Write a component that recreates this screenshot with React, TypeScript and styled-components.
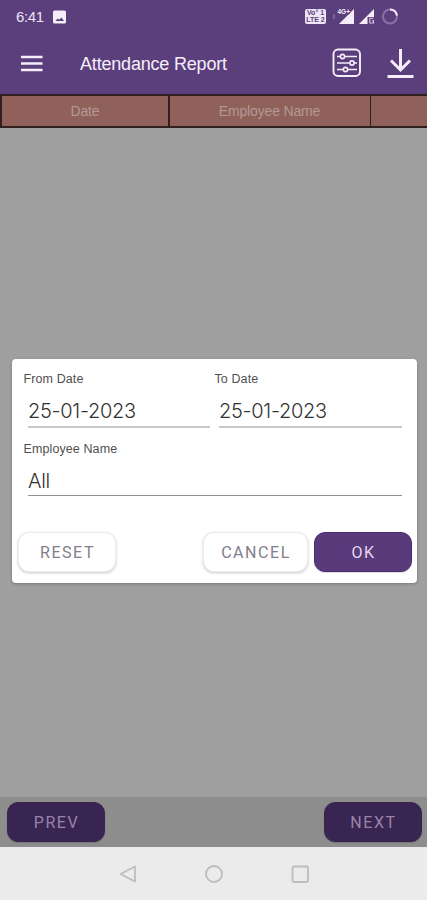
import React from 'react';
import styled, { createGlobalStyle } from 'styled-components';

const GlobalStyle = createGlobalStyle`
  * { box-sizing: border-box; }
  body { margin: 0; font-family: Inter, "Liberation Sans", sans-serif; }
  svg { display: block; flex: none; }
`;

const Screen = styled.div`
  position: relative;
  display: flex;
  flex-direction: column;
  width: 427px;
  height: 900px;
  overflow: hidden;
  background: #9f9f9f;
`;

const StatusBar = styled.header`
  display: flex;
  align-items: center;
  height: 32px;
  padding: 1px 28px 0 16px;
  background: #5b3f7c;
  color: #eee4f5;
`;

const Clock = styled.time`
  width: 37px;
  font: 400 15px/18px "Liberation Sans", sans-serif;
  letter-spacing: -0.35px;
`;

const StatusIcons = styled.div`
  display: flex;
  align-items: center;
  margin-left: auto;
`;

const VolteBadge = styled.span`
  display: grid;
  align-content: center;
  width: 21px;
  height: 15px;
  margin-right: 7px;
  border-radius: 2px;
  background: #eee4f5;
  color: #5b3f7c;
  font: 700 7px/6.5px "Liberation Sans", sans-serif;
  text-align: center;
  white-space: nowrap;
`;

const AppBar = styled.div`
  display: flex;
  align-items: center;
  height: 62px;
  padding: 0 13px 0 20px;
  background: #5b3f7c;
  color: #f5eef9;
`;

const Title = styled.h1`
  flex: 1;
  margin: 1px 0 0 36px;
  font: 400 18px/24px "Liberation Sans", sans-serif;
  letter-spacing: -0.19px;
`;

const Actions = styled.div`
  display: flex;
  align-items: center;
  gap: 24px;
`;

const TableHead = styled.div`
  display: grid;
  grid-template-columns: 166px 200px 1fr;
  column-gap: 1.5px;
  height: 34px;
  padding: 1.5px 0 2px 2px;
  background: #30201f;
`;

const HeadCell = styled.div`
  display: flex;
  align-items: center;
  justify-content: center;
  background: #90615b;
  color: #b29a94;
  font: 400 14px/18px "Liberation Sans", sans-serif;
  letter-spacing: -0.15px;
`;

const Body = styled.main`
  flex: 1;
`;

const Footer = styled.footer`
  display: flex;
  justify-content: space-between;
  align-items: center;
  height: 50px;
  padding: 0 5px 0 7px;
  background: #8d8d8d;
`;

const NavBar = styled.nav`
  display: flex;
  justify-content: center;
  align-items: center;
  gap: 66px;
  height: 53px;
  background: #ebebeb;
`;

const Dialog = styled.section`
  position: absolute;
  left: 12px;
  top: 359px;
  width: 405px;
  height: 224px;
  display: flex;
  flex-direction: column;
  padding: 12px 5px 11px;
  border-radius: 4px;
  background: #fff;
  box-shadow: 0 1px 3px rgba(0, 0, 0, 0.25);
`;

const DateFields = styled.div`
  display: grid;
  grid-template-columns: 186px 187px;
  column-gap: 5px;
  height: 70px;
  padding: 0 10px 0 7px;
`;

const FieldBlock = styled.div<{ $full?: boolean }>`
  display: flex;
  flex-direction: column;
  padding: ${(p) => (p.$full ? '0 10px 0 7px' : '0')};
`;

const Label = styled.label`
  margin-left: -0.5px;
  font: 400 12.5px/16px "Liberation Sans", sans-serif;
  letter-spacing: 0.1px;
  color: #505050;
`;

const Value = styled.div<{ $thick?: boolean }>`
  height: ${(p) => (p.$thick ? '41px' : '39px')};
  margin-left: 4px;
  padding-top: 12px;
  border-bottom: ${(p) => (p.$thick ? '2px solid #c9c9c9' : '1px solid #929292')};
  color: #333;
  font: 300 20px/25px Inter, sans-serif;
  letter-spacing: ${(p) => (p.$thick ? '-0.3px' : '-0.3px')};
`;

const DialogActions = styled.div`
  display: flex;
  align-items: center;
  gap: 6px;
  margin-top: auto;
  padding-left: 1px;
`;

const Button = styled.button<{ $tone: 'light' | 'primary' | 'dim'; $wide?: boolean }>`
  width: ${(p) => (p.$wide ? '105px' : '98px')};
  height: 40px;
  margin: 0;
  padding: 1px 0 0 1px;
  border: 1px solid ${(p) => ({ light: '#ededed', primary: '#4b2975', dim: '#38254f' })[p.$tone]};
  border-radius: 11px;
  background: ${(p) => ({ light: '#fff', primary: '#593a7b', dim: '#392551' })[p.$tone]};
  color: ${(p) => ({ light: '#827e8a', primary: '#e5d8ee', dim: '#9a83aa' })[p.$tone]};
  box-shadow: ${(p) => (p.$tone === 'light' ? '0 1px 3px rgba(0,0,0,.22)' : '0 1px 1px rgba(0,0,0,.15)')};
  font: 400 16px/20px Roboto, sans-serif;
  letter-spacing: 1.55px;
`;

const Reset = styled(Button)`
  margin-right: auto;
`;

const PictureIcon = () => (
  <svg width="13" height="14" viewBox="0 0 13 14">
    <rect y="0.5" width="13" height="13" rx="1.5" fill="#f5eef9" />
    <path d="M2.5 11l2.2-2.6 1.5 1.4L8.5 7.5l2.5 3.5z" fill="#5b3f7c" />
  </svg>
);

const SignalIcons = () => (
  <svg width="66" height="20" viewBox="0 0 66 20">
    <path d="M1 7v5" stroke="#7b6198" strokeWidth="2" />
    <path d="M21 2v15H6z" fill="#f5eef9" />
    <path d="M5 1h12v6H5z" fill="#5b3f7c" />
    <text x="4.5" y="6.5" fontFamily="Liberation Sans" fontWeight="700" fontSize="6.5" fill="#f5eef9">4G+</text>
    <path d="M41 2v15H26z" fill="#f5eef9" />
    <path d="M34.5 10H41v7h-6.5z" fill="#5b3f7c" />
    <path d="M40.5 11.2h-3.7v4.8h3.7v-2.2h-1.5" stroke="#d8c9e4" strokeWidth="1.1" fill="none" />
    <circle cx="57" cy="9.5" r="7" fill="none" stroke="#8b72a6" strokeWidth="2" />
    <path d="M57 2.5a7 7 0 0 1 7 6" fill="none" stroke="#f5eef9" strokeWidth="2.2" />
  </svg>
);

const MenuIcon = () => (
  <svg width="24" height="20" viewBox="0 0 24 20">
    <path d="M1 4h21.5M1 10.5h21.5M1 17h21.5" stroke="#f5eef9" strokeWidth="2.3" />
  </svg>
);

const FilterIcon = () => (
  <svg width="30" height="30" viewBox="0 0 30 30" fill="none" stroke="#f5eef9">
    <rect x="1.5" y="1.5" width="26.5" height="26.5" rx="4.5" strokeWidth="1.9" />
    <path d="M5 8.5h20M5 15h20M5 21.5h20" strokeWidth="1.7" />
    <g fill="#5b3f7c" strokeWidth="1.6">
      <circle cx="10.5" cy="8.5" r="2.1" />
      <circle cx="20" cy="15" r="2.1" />
      <circle cx="13.5" cy="21.5" r="2.1" />
    </g>
  </svg>
);

const DownloadIcon = () => (
  <svg width="28" height="32" viewBox="0 0 28 32" fill="none" stroke="#f5eef9" strokeWidth="3">
    <path d="M14.5 2v21M5 13.5l9.5 9.5L24 13.5M1.5 29.5h26" />
  </svg>
);

export default function App() {
  return (
    <>
      <GlobalStyle />
      <Screen>
        <StatusBar>
          <Clock>6:41</Clock>
          <PictureIcon />
          <StatusIcons>
            <VolteBadge><span>Vo° 1</span><span>LTE 2</span></VolteBadge>
            <SignalIcons />
          </StatusIcons>
        </StatusBar>
        <AppBar>
          <MenuIcon />
          <Title>Attendance Report</Title>
          <Actions>
            <FilterIcon />
            <DownloadIcon />
          </Actions>
        </AppBar>
        <TableHead>
          <HeadCell>Date</HeadCell>
          <HeadCell>Employee Name</HeadCell>
          <HeadCell />
        </TableHead>
        <Body />
        <Footer>
          <Button $tone="dim">PREV</Button>
          <Button $tone="dim">NEXT</Button>
        </Footer>
        <NavBar>
          <svg width="20" height="20" viewBox="0 0 20 20" fill="none" stroke="#bdbdbd" strokeWidth="1.8">
            <path d="M2.5 10L17 2.5v15z" strokeLinejoin="round" />
          </svg>
          <svg width="20" height="20" viewBox="0 0 20 20" fill="none" stroke="#bdbdbd" strokeWidth="1.8">
            <circle cx="10" cy="10" r="8" />
          </svg>
          <svg width="20" height="20" viewBox="0 0 20 20" fill="none" stroke="#bdbdbd" strokeWidth="1.8">
            <rect x="2.5" y="2.5" width="15.5" height="15.5" rx="1.5" />
          </svg>
        </NavBar>
        <Dialog role="dialog">
          <DateFields>
            <FieldBlock>
              <Label>From Date</Label>
              <Value $thick>25-01-2023</Value>
            </FieldBlock>
            <FieldBlock>
              <Label>To Date</Label>
              <Value $thick>25-01-2023</Value>
            </FieldBlock>
          </DateFields>
          <FieldBlock $full>
            <Label>Employee Name</Label>
            <Value>All</Value>
          </FieldBlock>
          <DialogActions>
            <Reset $tone="light">RESET</Reset>
            <Button $tone="light" $wide>CANCEL</Button>
            <Button $tone="primary">OK</Button>
          </DialogActions>
        </Dialog>
      </Screen>
    </>
  );
}
